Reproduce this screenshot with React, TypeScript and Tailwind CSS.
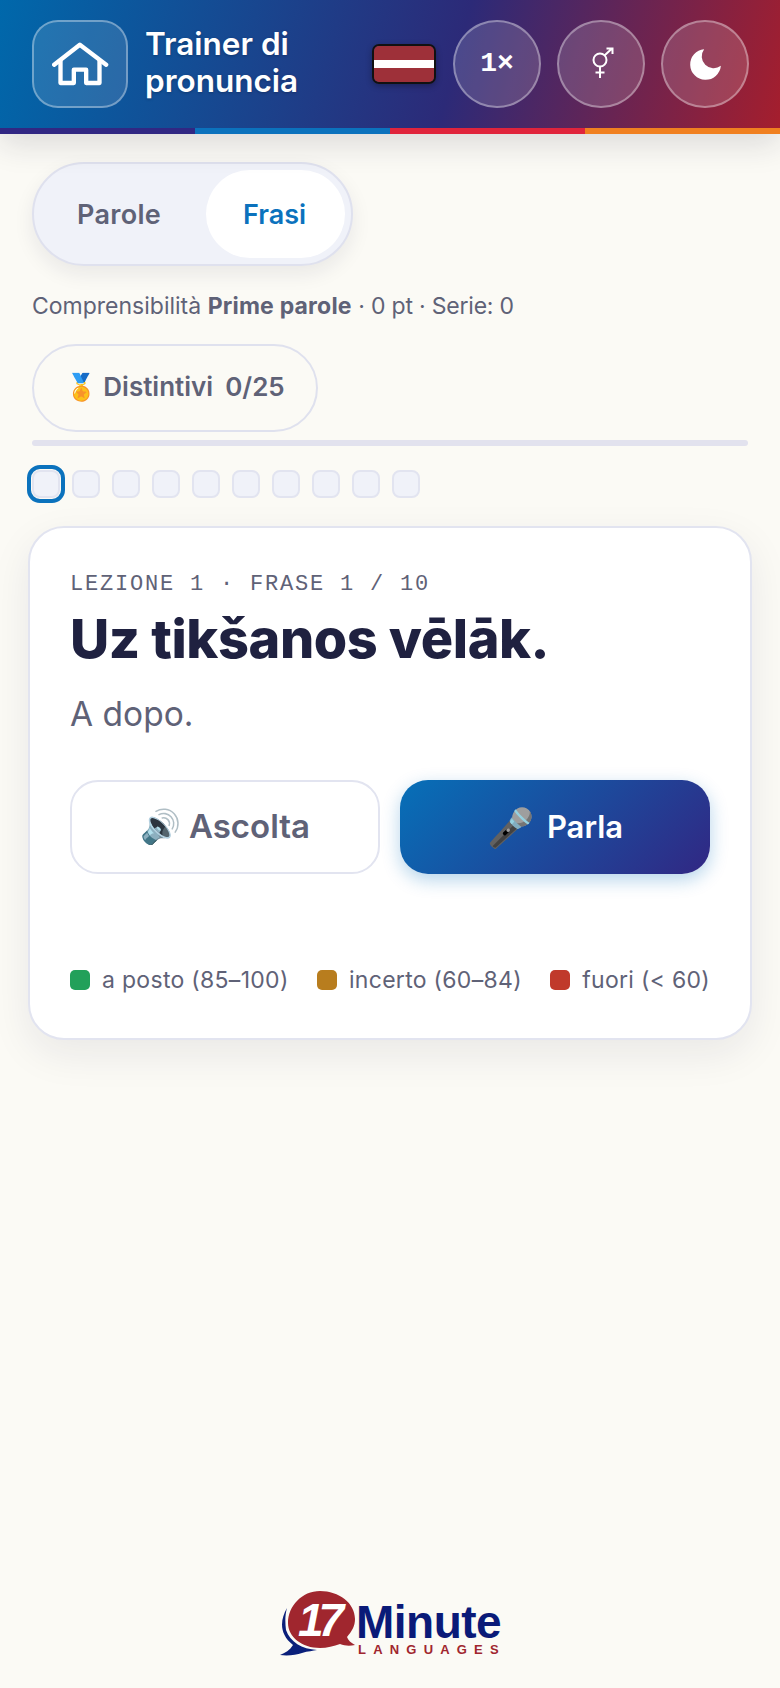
const stripes = ['bg-[#312783]', 'bg-[#0b72bd]', 'bg-[#e0243c]', 'bg-[#f08020]'];

const legend = [
  { label: 'a posto (85–100)', color: 'bg-[#22a05a]' },
  { label: 'incerto (60–84)', color: 'bg-[#b87d1e]' },
  { label: 'fuori (< 60)', color: 'bg-[#c0392b]' },
];

const RoundButton = ({ children }: { children: React.ReactNode }) => (
  <button className="flex h-[88px] w-[88px] items-center justify-center rounded-full border-2 border-white/35 bg-white/15 text-white">
    {children}
  </button>
);

const HouseIcon = () => (
  <svg viewBox="160 122 170 132" className="h-[44px] w-[57px]" fill="none" stroke="white" strokeWidth="13" strokeLinecap="round" strokeLinejoin="round">
    <path d="M166 190L243 130L322 190" />
    <path d="M185 178V245H225V205H262V245H302V178" />
  </svg>
);

const GenderIcon = () => (
  <svg viewBox="0 0 22 32" className="h-[32px] w-[22px]" fill="none" stroke="white" strokeWidth="2">
    <circle cx="8" cy="13" r="6.5" />
    <path d="M8 19.5V31M3.5 25.5H12.5M12.5 8.5L20 1.5M14.5 1.5H20.5V7" />
  </svg>
);

const MoonIcon = () => (
  <svg viewBox="0 0 24 24" className="h-[41px] w-[41px]" fill="white">
    <path d="M21 12.8A9 9 0 1 1 11.2 3a7 7 0 0 0 9.8 9.8z" />
  </svg>
);

const Logo = () => (
  <div className="relative h-[66px] w-[220px]">
    <svg viewBox="0 0 80 66" className="absolute left-0 top-0 h-[66px] w-[80px]">
      {/* blue swoosh behind the speech bubble */}
      <path d="M7 18C0 30 -1 44 13 55C10 60 5 63 0 65C8 66 16 65 22 63C28 61 33 61 37 60C22 59 10 52 6 40C5 32 5 25 7 18Z" fill="#0a1f7a" />
      <path d="M40 1C22 1 8 16 8 33C8 47 22 58 40 58C47 58 54 56 60 54C65 56 70 56 75 55C71 53 68 50 67 47C72 41 75 36 75 29C75 13 59 1 40 1Z" fill="#a0262e" />
    </svg>
    <span className="absolute left-[18px] top-[10px] font-['Liberation_Sans',sans-serif] text-[46px] leading-[40px] font-bold tracking-[-5px] text-white italic">
      17
    </span>
    <span className="absolute left-[76px] top-[14px] font-['Liberation_Sans',sans-serif] text-[46px] leading-[36px] font-bold tracking-[-0.5px] text-[#0a1a78]">
      Minute
    </span>
    <span className="absolute left-[78px] top-[53px] font-['Liberation_Sans',sans-serif] text-[13px] leading-[14px] font-bold tracking-[7.2px] whitespace-nowrap text-[#a0262e]">
      LANGUAGES
    </span>
  </div>
);

export default function App() {
  return (
    <div className="flex min-h-[1688px] flex-col bg-[#fbfaf5] font-['Inter',sans-serif] text-[#5f6277]">
      <header className="relative shadow-[0_10px_30px_rgba(30,30,60,0.14)]">
        <div className="flex h-[128px] items-center bg-[linear-gradient(105deg,#0068ab_0%,#2c2a78_58%,#a51e2d_100%)] pl-8 pr-[31px]">
          <button className="flex h-[88px] w-[96px] items-center justify-center rounded-[26px] border-2 border-white/35 bg-white/12">
            <HouseIcon />
          </button>
          <h1 className="ml-[17px] w-[200px] pb-[4px] text-[31.5px] leading-[37px] font-semibold text-white [text-shadow:0_1px_3px_rgba(0,0,0,0.25)]">
            Trainer di pronuncia
          </h1>
          <div className="ml-auto mr-[17px] flex h-[40px] w-[64px] flex-col overflow-hidden rounded-[7px] border-2 border-[#111] shadow-[0_2px_6px_rgba(0,0,0,0.3)]">
            <div className="flex-[2] bg-[#9e3039]" />
            <div className="flex-1 bg-white" />
            <div className="flex-[2] bg-[#9e3039]" />
          </div>
          <div className="flex items-center gap-[16px]">
            <RoundButton>
              <span className="font-['Liberation_Mono',monospace] text-[28px] font-bold">1×</span>
            </RoundButton>
            <RoundButton>
              <span className="ml-[3px] mb-[2px]">
                <GenderIcon />
              </span>
            </RoundButton>
            <RoundButton>
              <MoonIcon />
            </RoundButton>
          </div>
        </div>
        <div className="grid h-[6px] grid-cols-4">
          {stripes.map((s) => (
            <div key={s} className={s} />
          ))}
        </div>
      </header>

      <main className="flex flex-col px-8 pt-[28px]">
        <div className="flex h-[104px] w-[321px] items-center justify-between rounded-full border-2 border-[#dfe1ee] bg-[#f0f2f9] px-[6px] shadow-[0_8px_20px_rgba(30,30,60,0.08)]">
          <span className="ml-[37px] pt-[2px] text-[27px] font-semibold tracking-[0.3px]">Parole</span>
          <span className="flex h-[88px] w-[139px] items-center justify-center rounded-full bg-white pr-[2px] pt-[2px] text-[27px] font-semibold text-[#0b72bd]">
            Frasi
          </span>
        </div>

        <p className="mt-[25px] text-[23px] leading-[30px]">
          Comprensibilità <b className="font-bold tracking-[0.2px]">Prime parole</b>{' '}
          <span className="tracking-[-0.2px]">· 0 pt · Serie: 0</span>
        </p>

        <div className="mt-[23px] flex h-[88px] w-[286px] items-center justify-center rounded-full border-2 border-[#dfe1ee] pb-[3px] text-[26px] font-semibold">
          <span className="mr-[6px]">🏅</span>
          <span>Distintivi</span>
          <span className="ml-[12px]">0/25</span>
        </div>

        <div className="mt-[8px] h-[6px] rounded-full bg-[#e2e2ee]" />

        <div className="mt-[24px] flex gap-[12px]">
          {Array.from({ length: 10 }).map((_, i) => (
            <div
              key={i}
              className={`h-[28px] w-[28px] rounded-[8px] border-2 border-[#e2e4f0] bg-[#f0f2f9] ${
                i === 0 ? 'outline-[4px] outline-offset-[1px] outline-[#0b72bd]' : ''
              }`}
            />
          ))}
        </div>

        <section className="-mx-[4px] mt-[28px] rounded-[36px] border-2 border-[#e2e4f0] bg-white px-[40px] pb-[43px] pt-[43px] shadow-[0_14px_40px_rgba(30,30,60,0.08)]">
          <p className="font-['Liberation_Mono',monospace] text-[22px] leading-[28px] tracking-[1.8px]">
            LEZIONE 1 · FRASE 1 / 10
          </p>
          <h2 className="mt-[9px] text-[54px] leading-[62px] font-extrabold tracking-[-0.4px] text-[#1f2140]">
            Uz tikšanos vēlāk.
          </h2>
          <p className="mt-[22px] text-[33.5px] leading-[44px]">A dopo.</p>

          <div className="mt-[44px] grid grid-cols-2 gap-[20px]">
            <button className="flex h-[94px] items-center justify-center gap-[8px] rounded-[28px] border-2 border-[#e2e4f0] bg-white text-[33px] font-semibold">
              <span>🔊</span> Ascolta
            </button>
            <button className="flex h-[94px] items-center justify-center gap-[13px] rounded-[28px] bg-[linear-gradient(135deg,#0670b8,#312783)] text-[31px] font-semibold text-white shadow-[0_6px_18px_rgba(11,114,189,0.3)]">
              <span className="text-[38px]">🎤</span> Parla
            </button>
          </div>

          <div className="mt-[91px] flex justify-between text-[23px] leading-[30px] tracking-[0.3px]">
            {legend.map((l) => (
              <span key={l.label} className="flex items-center gap-[12px]">
                <i className={`h-[20px] w-[20px] rounded-[5px] ${l.color}`} />
                {l.label}
              </span>
            ))}
          </div>
        </section>
      </main>

      <footer className="mt-auto flex justify-center pb-[32px]">
        <Logo />
      </footer>
    </div>
  );
}
